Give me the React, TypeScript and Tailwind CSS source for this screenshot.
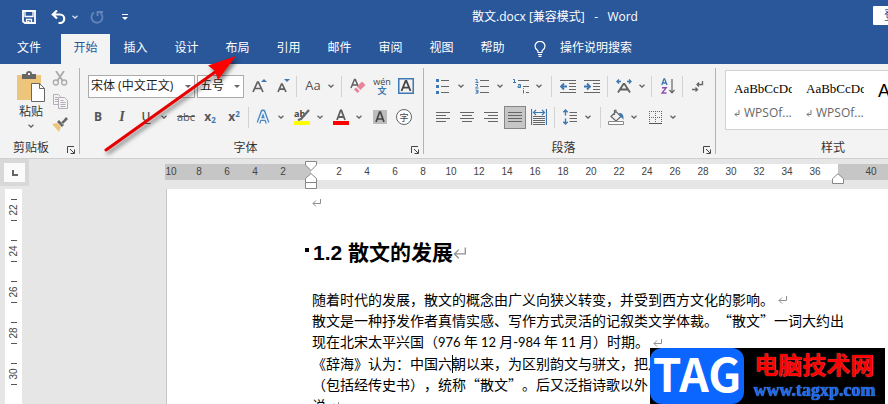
import React from "react";

const ui = "font-['Open_Sans','Noto_Sans_CJK_SC',sans-serif]";

type IconProps = { w?: number; h?: number; children: React.ReactNode };

function Icon({ w = 16, h = 16, children }: IconProps) {
  return (
    <svg width={w} height={h} viewBox={`0 0 ${w} ${h}`} fill="none" className="block shrink-0" aria-hidden="true">
      {children}
    </svg>
  );
}

function Chevron() {
  return (
    <Icon w={6} h={4}>
      <path d="M.5.7 3 3 5.5.7" stroke="#666" strokeWidth="1.3" />
    </Icon>
  );
}

function Tool({ label, children }: { label: string; children: React.ReactNode }) {
  return (
    <button aria-label={label} className="flex h-6 w-6 shrink-0 items-center justify-center">
      {children}
    </button>
  );
}

function Split({ label, children }: { label: string; children: React.ReactNode }) {
  return (
    <div className="flex shrink-0">
      <Tool label={label}>{children}</Tool>
      <button aria-label={`${label}选项`} className="flex h-6 w-3 items-center justify-center">
        <Chevron />
      </button>
    </div>
  );
}

function Bar() {
  return <div className="mx-[4px] h-[21px] w-px shrink-0 bg-[#d2d2d2]" />;
}

function GroupBar() {
  return <div className="mt-1 h-[86px] w-px shrink-0 bg-[#b4b4b4]" />;
}

function Launcher({ name }: { name: string }) {
  return (
    <button aria-label={`${name}设置`} className="mt-1 mr-1">
      <Icon w={8} h={8}>
        <path d="M.5 7V.5H7M3 3l4 4M7.5 3.5v4h-4" stroke="#444" />
      </Icon>
    </button>
  );
}

function GroupLabel({ name }: { name: string }) {
  return (
    <div className="mt-[9px] flex h-5 items-center">
      <span className="flex-1 text-center text-xs text-[#333]">{name}</span>
      <Launcher name={name} />
    </div>
  );
}

function Triangle() {
  return (
    <svg width="6" height="3" viewBox="0 0 6 3" className="pointer-events-none absolute top-[10px] right-1" aria-hidden="true">
      <path d="M0 0h6L3 3z" fill="#666" />
    </svg>
  );
}

function Return({ big = false }: { big?: boolean }) {
  return (
    <svg width={big ? 13 : 9} height={big ? 13 : 9} viewBox="0 0 9 9" fill="none" className="shrink-0" aria-hidden="true">
      <path d="M8.500 1v4.500H1M4 2.500l-3 3 3 3" stroke="#8f8f8f" strokeWidth={big ? 0.9 : 1} />
    </svg>
  );
}

function Lines({ rows }: { rows: [number, number][] }) {
  return (
    <Icon w={14} h={11}>
      {rows.map(([a, b], i) => (
        <path key={i} d={`M${a} ${i * 3 + 0.5}H${b}`} stroke="#666" />
      ))}
    </Icon>
  );
}

function TitleBar() {
  return (
    <div className="flex h-[34px]">
      <div className="flex w-[237px] shrink-0 items-center pl-[22px]">
        <button aria-label="保存">
          <Icon w={14} h={14}>
            <path d="M1 1h12v12H3L1 11.500z" stroke="#fff" strokeWidth="1.800" />
            <path d="M3 1v5.500h8V1M4.500 13V9.500h5V13" stroke="#fff" strokeWidth="1.300" />
            <path d="M5.500 11h2v2h-2z" fill="#fff" />
          </Icon>
        </button>
        <button aria-label="撤消" className="ml-[15px]">
          <Icon w={15} h={14}>
            <path d="M1.500 4.500H9a4 4 0 0 1 0 8.500H7.500M6 .5 1.800 4.500 6 8.500" stroke="#fff" strokeWidth="2.200" />
          </Icon>
        </button>
        <button aria-label="撤消选项" className="ml-[6px]">
          <Icon w={6} h={4}>
            <path d="M.5.7 3 3 5.500.7" stroke="#d5deec" strokeWidth="1.300" />
          </Icon>
        </button>
        <button aria-label="重复" className="ml-3">
          <Icon w={14} h={14}>
            <path d="M4 2.600a5.500 5.500 0 1 0 6.500.4M7.500 6V2H13" stroke="#6485b8" strokeWidth="1.800" />
          </Icon>
        </button>
        <button aria-label="自定义快速访问工具栏" className="ml-[18px]">
          <Icon w={6} h={7}>
            <path d="M0 .5h6" stroke="#fff" />
            <path d="M0 3h6L3 6z" fill="#fff" />
          </Icon>
        </button>
      </div>
      <h1 className="flex-1 text-center text-xs leading-[33px] whitespace-pre text-white">
        散文.docx [兼容模式]{"   -   "}Word
      </h1>
      <button className="mt-[6px] h-[19px] w-[15px] overflow-hidden rounded-l-[1px] bg-white pl-[11px] text-left text-xs leading-[18px] whitespace-nowrap text-[#2a579a]">
        登录
      </button>
    </div>
  );
}

function Tabs() {
  const tabs = ["插入", "设计", "布局", "引用", "邮件", "审阅", "视图", "帮助"];
  return (
    <nav className="flex h-[30px] text-xs text-white">
      <button className="w-[61px] pr-[3px] pb-[2px]">文件</button>
      <button className="w-[49px] bg-[#f3f3f3] pb-[2px] text-[#2a579a]">开始</button>
      {tabs.map((t) => (
        <button key={t} className="w-[51px] pb-[2px]">
          {t}
        </button>
      ))}
      <label className="ml-4 flex flex-1 items-center">
        <Icon w={12} h={16}>
          <path d="M4 11.500V10C2.500 8.800 1 7.500 1 5.300a5 5 0 0 1 10 0C11 7.500 9.500 8.800 8 10v1.500zM4 13.500h4M4.500 15.300h3" stroke="#fff" strokeWidth="1.200" />
        </Icon>
        <input
          aria-label="操作说明搜索"
          placeholder="操作说明搜索"
          className="ml-[14px] w-40 bg-transparent pb-[2px] outline-none placeholder:text-white"
        />
      </label>
    </nav>
  );
}

function Clipboard() {
  return (
    <section className="flex w-[79px] shrink-0 flex-col">
      <div className="flex h-[65px] pt-[7px] pl-[15px]">
        <button className="flex h-[60px] w-8 shrink-0 flex-col items-center text-xs text-[#333]">
          <Icon w={28} h={31}>
            <path d="M0 4h24v25H0z" fill="#edc67c" />
            <path d="M5 3h4a3 3 0 0 1 6 0h4v5H5z" fill="#666" />
            <path d="M11 2h2v2h-2z" fill="#f3f3f3" />
            <path d="M14.500 12.500h8l5 5v13h-13z" fill="#fff" stroke="#666" />
            <path d="M22.500 12.500v5h5" stroke="#666" />
          </Icon>
          <span className="leading-5">粘贴</span>
          <span className="pt-[2px]">
            <Chevron />
          </span>
        </button>
        <div className="ml-[5px] flex flex-col items-center gap-[8px]">
          <button aria-label="剪切">
            <Icon w={16} h={15}>
              <path d="M4 0l6.500 9.500M12 0 5.500 9.500" stroke="#aaa" strokeWidth="1.800" />
              <circle cx="3.800" cy="11.500" r="2.500" stroke="#aaa" strokeWidth="1.300" />
              <circle cx="12.200" cy="11.500" r="2.500" stroke="#aaa" strokeWidth="1.300" />
            </Icon>
          </button>
          <button aria-label="复制">
            <Icon w={16} h={15}>
              <path d="M1.500.5h5l2 2v8h-7zM3 3.500h3M3 5.500h3M3 7.500h3" stroke="#b5adb8" />
              <path d="M6.500 3.500h6l3 3v8h-9z" fill="#f3f3f3" stroke="#b5adb8" />
              <path d="M8.500 6.500h3M8.500 8.500h5M8.500 10.500h5M8.500 12.500h5" stroke="#b5adb8" />
            </Icon>
          </button>
          <button aria-label="格式刷">
            <Icon w={16} h={15}>
              <path d="M0 7l5-1 4 4-2 5z" fill="#edc67c" />
              <path d="M5 5l5 5 2-2-5-5zM9 5.500 11.500 3 14 0l2 2-3 3-2.500 2.500z" fill="#666" />
            </Icon>
          </button>
        </div>
      </div>
      <div className="mt-[9px] flex h-5 items-center pl-[13px]">
        <span className="flex-1 text-xs text-[#333]">剪贴板</span>
        <Launcher name="剪贴板" />
      </div>
    </section>
  );
}

function FontGroup() {
  return (
    <section className="w-[343px] shrink-0 pt-[10px] text-[#555]">
      <div className="flex h-6 items-center pl-2">
        <div className="relative w-[107px]">
          <select aria-label="字体" className="block h-[23px] w-full appearance-none border border-[#ababab] bg-white pl-[2px] text-xs text-[#222]">
            <option>宋体 (中文正文)</option>
          </select>
          <Triangle />
        </div>
        <div className="relative ml-[2px] w-[47px]">
          <select aria-label="字号" className="block h-[23px] w-full appearance-none border border-[#ababab] bg-white pl-[2px] text-xs text-[#222]">
            <option>五号</option>
          </select>
          <Triangle />
        </div>
        <div className="ml-[3px] flex items-center">
          <Tool label="增大字号">
            <Icon>
              <path d="M2 14 6.500 4h.8L12 14M3.500 10.500h7" stroke="#606060" strokeWidth="1.700" />
              <path d="M10 4h6l-3-3z" fill="#3c78b4" />
            </Icon>
          </Tool>
          <Tool label="减小字号">
            <Icon>
              <path d="M3 14 6.500 6h.7L11 14M4.500 11.200h5" stroke="#606060" strokeWidth="1.700" />
              <path d="M9 1h6l-3 3z" fill="#3c78b4" />
            </Icon>
          </Tool>
          <div className="mr-[4px] ml-[1px] h-[21px] w-px bg-[#d2d2d2]" />
          <Split label="更改大小写">
            <span className="text-[13px]">Aa</span>
          </Split>
          <Bar />
          <Tool label="清除所有格式">
            <Icon>
              <path d="M1 10 4.500 1.500h.8L8.500 9M2.500 7h5" stroke="#606060" strokeWidth="1.500" />
              <path d="M7 8.500 12 3.500l3.500 3.500-5 5z" fill="#e8849a" />
              <path d="M6 9.500 9.500 13 7.500 15 4 11.500z" fill="#e8849a" />
            </Icon>
          </Tool>
          <Tool label="拼音指南">
            <span className="flex flex-col items-center">
              <span className="text-[9px] leading-[9px] text-[#444]">wén</span>
              <span className="text-[9px] leading-[10px] font-bold text-[#3c78b4]">文</span>
            </span>
          </Tool>
          <Tool label="字符边框">
            <Icon>
              <path d="M.75.75h14.500v14.500H.75z" stroke="#3c78b4" strokeWidth="1.500" />
              <path d="M3.500 13 7.600 3h.8l4.100 10M5 9.700h6" stroke="#444" strokeWidth="1.800" />
            </Icon>
          </Tool>
        </div>
      </div>
      <div className="mt-[7px] flex h-6 items-center pl-[6px]">
        <Tool label="加粗">
          <b className="text-xs">B</b>
        </Tool>
        <Tool label="倾斜">
          <i className="font-['Liberation_Serif',serif] text-sm font-bold">I</i>
        </Tool>
        <Split label="下划线">
          <span className="text-xs font-semibold underline underline-offset-2">U</span>
        </Split>
        <div className="ml-[4px] flex">
          <Tool label="删除线">
            <span className="text-[11px] line-through">abc</span>
          </Tool>
          <Tool label="下标">
            <b className="text-xs">
              x<sub className="text-[8px] text-[#3c78b4]">2</sub>
            </b>
          </Tool>
          <Tool label="上标">
            <b className="text-xs">
              x<sup className="text-[8px] text-[#3c78b4]">2</sup>
            </b>
          </Tool>
        </div>
        <div className="mx-[2px] h-[21px] w-px bg-[#d2d2d2]" />
        <div className="flex gap-[3px]">
          <Split label="文本效果">
            <Icon>
              <path d="M3.500 14 7.600 2.500h.8L12.500 14M5 10h6" stroke="#4a86c0" strokeWidth="4" strokeLinejoin="round" />
              <path d="M3.500 14 7.600 3h.8L12.500 14M5 10h6" stroke="#f2f7fc" strokeWidth="1.500" />
            </Icon>
          </Split>
          <Split label="突出显示颜色">
            <Icon w={16} h={16}>
              <text x="0" y="8" fontSize="9" fontWeight="bold" fill="#444">ab</text>
              <path d="M4 11l3-1 8-9" stroke="#666" strokeWidth="2.200" />
              <path d="M0 12h16v4H0z" fill="#ff0" />
            </Icon>
          </Split>
          <Split label="字体颜色">
            <Icon w={16} h={16}>
              <path d="M4 11 7.600 1.500h.8L12 11M5.500 8h5" stroke="#606060" strokeWidth="1.800" />
              <path d="M0 12h16v4H0z" fill="#f00" />
            </Icon>
          </Split>
          <div className="flex">
            <Tool label="字符底纹">
              <Icon w={14} h={14}>
                <path d="M0 0h14v14H0z" fill="#bdbdbd" />
                <path d="M3 12 6.600 2h.8L11 12M4.500 9h5" stroke="#444" strokeWidth="1.700" />
              </Icon>
            </Tool>
            <Tool label="带圈字符">
              <span className="flex h-4 w-4 items-center justify-center rounded-full border border-[#666] bg-white text-[9px] leading-none text-[#444]">
                字
              </span>
            </Tool>
          </div>
        </div>
      </div>
      <GroupLabel name="字体" />
    </section>
  );
}

function ParagraphGroup() {
  return (
    <section className="w-[291px] shrink-0 pt-[10px] text-[#555]">
      <div className="flex h-6 items-center pl-[7px]">
        <div className="flex gap-[3px]">
          <Split label="项目符号">
            <Icon w={14} h={16}>
              <path d="M0 1h3v3H0zM0 7h3v3H0zM0 13h3v3H0z" fill="#3c78b4" />
              <path d="M5 2.500h8M5 8.500h8M5 14.500h8" stroke="#666" />
            </Icon>
          </Split>
          <Split label="编号">
            <Icon w={14} h={16}>
              <path d="M.5 1.500H2v3M.5 4.500h3M.5 6.500h2v1.700L.5 10h3M.5 12.200h2.500v3H.5M1 13.700h2" stroke="#3c78b4" />
              <path d="M5 2.500h9M5 8.500h9M5 14.500h9" stroke="#666" />
            </Icon>
          </Split>
          <Split label="多级列表">
            <Icon>
              <path d="M0 1.500h1.500v3M0 4.500h3M5 6.500h2.500v3H5V8h2.500M10.500 12v3.500M10.500 10v1" stroke="#3c78b4" />
              <path d="M5 2.500h11M10 8.500h6M13 14.500h3" stroke="#666" />
            </Icon>
          </Split>
        </div>
        <div className="mr-[4px] ml-[6px] h-[21px] w-px bg-[#d2d2d2]" />
        <Tool label="减少缩进量">
          <Icon w={16} h={14}>
            <path d="M0 1.500h16M9 4.500h7M9 7.500h7M9 10.500h7M0 13.500h16" stroke="#666" />
            <path d="M7 7.500H1M4 4.500l-3 3 3 3" stroke="#3c78b4" strokeWidth="1.800" />
          </Icon>
        </Tool>
        <Tool label="增加缩进量">
          <Icon w={16} h={14}>
            <path d="M0 1.500h16M9 4.500h7M9 7.500h7M9 10.500h7M0 13.500h16" stroke="#666" />
            <path d="M0 7.500h6M3 4.500l3 3-3 3" stroke="#3c78b4" strokeWidth="1.800" />
          </Icon>
        </Tool>
        <div className="mr-[4px] ml-[3px] h-[21px] w-px bg-[#d2d2d2]" />
        <Split label="中文版式">
          <Icon>
            <path d="M2 14.500 7.500 6h1l5.500 8.500M4.500 11.500h7" stroke="#606060" strokeWidth="1.800" />
            <path d="M5 3.500H1M3 1.500l-2 2 2 2M11 3.500h4M13 1.500l2 2-2 2" stroke="#3c78b4" strokeWidth="1.400" />
          </Icon>
        </Split>
        <div className="mr-[4px] ml-[3px] h-[21px] w-px bg-[#d2d2d2]" />
        <Tool label="排序">
          <Icon w={14} h={16}>
            <path d="M.8 7 3 .8h.6L6 7M1.500 5h3.500" stroke="#3c78b4" strokeWidth="1.300" />
            <path d="M1 9.700h4.200L1 15h4.500" stroke="#9050b0" strokeWidth="1.400" />
            <path d="M11 1v13.500M8.500 12l2.500 2.800 2.500-2.800" stroke="#666" strokeWidth="1.200" />
          </Icon>
        </Tool>
        <div className="mr-[3px] ml-[2px] h-[21px] w-px bg-[#d2d2d2]" />
        <Tool label="显示编辑标记">
          <Icon w={12} h={13}>
            <path d="M10.500 1v3.500H5M7 2.500l-2 2 2 2M0 9.500h5.500M3.500 7.500l2 2-2 2" stroke="#666" strokeWidth="1.300" />
          </Icon>
        </Tool>
      </div>
      <div className="mt-[7px] flex h-6 items-center pl-[7px]">
        <Tool label="左对齐">
          <Lines rows={[[0, 14], [0, 10], [0, 14], [0, 10]]} />
        </Tool>
        <Tool label="居中">
          <Lines rows={[[0, 14], [2, 12], [0, 14], [2, 12]]} />
        </Tool>
        <Tool label="右对齐">
          <Lines rows={[[0, 14], [4, 14], [0, 14], [4, 14]]} />
        </Tool>
        <button aria-label="两端对齐" className="mx-px flex h-[23px] w-[22px] items-center justify-center border border-[#868686] bg-[#c6c6c6]">
          <Lines rows={[[0, 14], [0, 14], [0, 14], [0, 14]]} />
        </button>
        <Tool label="分散对齐">
          <Icon>
            <path d="M.5 0v16M15.500 0v16M3 3.500h10M5 1l-2.500 2.500L5 6M11 1l2.500 2.500L11 6" stroke="#3c78b4" strokeWidth="1.200" />
            <path d="M2 7.500h12M2 9.500h12M2 11.500h12M2 13.500h12M2 15.500h12" stroke="#666" />
          </Icon>
        </Tool>
        <div className="mx-[3px] h-[21px] w-px bg-[#d2d2d2]" />
        <Split label="行距">
          <Icon w={14} h={16}>
            <path d="M2.500 1v5.500M.3 3.200 2.500 1l2.200 2.200M2.500 9.500V15M.3 12.800 2.500 15l2.200-2.200" stroke="#3c78b4" strokeWidth="1.400" />
            <path d="M6.500 3.500H14M6.500 6.500H14M6.500 9.500H14M6.500 12.500H14" stroke="#666" />
          </Icon>
        </Split>
        <div className="mr-[3px] ml-[6px] h-[21px] w-px bg-[#d2d2d2]" />
        <div className="flex gap-[3px]">
          <Split label="底纹">
            <Icon>
              <path d="M3 7.500 8 2.500l5 5-5 4.500zM6.500 6V1.500a1.500 1.500 0 0 1 2 0" stroke="#666" strokeWidth="1.200" />
              <path d="M11 4c3-.5 5 2 4.500 7-1-2-2-2.500-3-3z" fill="#3c78b4" />
              <path d="M.5 12.500h15v3H.5z" fill="#fff" stroke="#888" />
            </Icon>
          </Split>
          <Split label="边框">
            <Icon w={13} h={13}>
              <path d="M0 .5h13M0 6.500h13M.5 0v13M6.500 0v13M12.500 0v13" stroke="#666" strokeDasharray="1 1" />
              <path d="M0 12.500h13" stroke="#555" />
            </Icon>
          </Split>
        </div>
      </div>
      <GroupLabel name="段落" />
    </section>
  );
}

function StylesGroup() {
  return (
    <section className="min-w-0 flex-1 overflow-hidden pt-[6px] pl-[9px]">
      <div className="flex h-[60px] w-[216px] border border-[#d2d2d2] bg-white">
        {[0, 1].map((n) => (
          <button key={n} className="flex w-[72px] shrink-0 flex-col pt-[9px] pr-[6px] pl-2 text-left">
            <span className="block w-full overflow-hidden font-['Liberation_Serif',serif] text-[13px] leading-[18px] text-black">AaBbCcDd</span>
            <span className="mt-[5px] flex items-center gap-1 text-xs leading-5 text-[#666]">
              <Icon w={6} h={7}>
                <path d="M5 0v4.500H1M3 2.500l-2 2 2 2" stroke="#777" />
              </Icon>
              WPSOf...
            </span>
          </button>
        ))}
        <button className="flex w-[72px] shrink-0 flex-col pt-[11px] pl-2 text-left font-['Liberation_Sans',sans-serif] text-lg leading-[18px] text-black">
          AaBb
        </button>
      </div>
      <p className="mt-[8px] w-[216px] text-center text-xs leading-5 text-[#333]">样式</p>
    </section>
  );
}

function HorizontalRuler() {
  const inner = Array.from({ length: 18 }, (_, i) => (i + 1) * 2);
  return (
    <div className="ml-[136px] flex h-[30px] shrink-0 pt-[5px] font-['Liberation_Sans',sans-serif] text-[10px] leading-4 text-[#444]">
      <div className="flex h-4 w-[146px] shrink-0 justify-end overflow-hidden bg-[#c6c6c6] pr-[14px]">
        {[10, 8, 6, 4, 2].map((n) => (
          <span key={n} className="w-7 shrink-0 text-center">
            {n}
          </span>
        ))}
      </div>
      <div className="relative flex h-4 w-[527px] shrink-0 bg-white pl-[14px]">
        <svg width="12" height="28" viewBox="0 0 12 28" className="absolute -top-[3px] -left-[6px]" aria-hidden="true">
          <path d="M.5.5h11V4L6 9.500.5 4zM6 12.500l5.500 5V27.500H.500V17.500zM.5 21.500h11" fill="#fff" stroke="#888" />
        </svg>
        {inner.map((n) => (
          <span key={n} className="w-7 shrink-0 text-center">
            {n}
          </span>
        ))}
        <svg width="12" height="11" viewBox="0 0 12 11" className="absolute top-[9px] -right-[6px] z-10" aria-hidden="true">
          <path d="M6 .7l5.500 5v4.800H.5V5.700z" fill="#fff" stroke="#888" />
        </svg>
      </div>
      <div className="h-4 flex-1 overflow-hidden bg-[#c6c6c6] pl-[19px]">
        <span className="block w-7 text-center">40</span>
      </div>
    </div>
  );
}

function VerticalRuler() {
  return (
    <div className="flex w-[29px] shrink-0 flex-col font-['Liberation_Sans',sans-serif] text-[10px] text-[#444]">
      <button aria-label="制表符" className="flex h-[27px] shrink-0 items-center justify-center border-4 border-[#d8d8d8] bg-[#fafafa]">
        <Icon w={6} h={6}>
          <path d="M1 0v5h5" stroke="#666" strokeWidth="2" />
        </Icon>
      </button>
      <div className="mt-[3px] ml-[5px] w-[17px] flex-1 overflow-hidden bg-white">
        {[22, 24, 26, 28, 30, 32].map((n) => (
          <div key={n} className="flex h-[41px] flex-col items-center justify-center gap-1">
            <span className="h-px w-[6px] bg-[#555]" />
            <span className="flex h-3 w-4 -rotate-90 items-center justify-center leading-3">{n}</span>
            <span className="h-px w-[6px] bg-[#555]" />
          </div>
        ))}
      </div>
    </div>
  );
}

function Num({ children }: { children: React.ReactNode }) {
  return <span className="font-['Lato',sans-serif] text-[13px]">{children}</span>;
}

function Paper() {
  return (
    <article
      lang="zh-CN"
      className="ml-[137px] min-h-0 flex-1 border-l border-[#c6c6c6] bg-white pt-[3px] pl-[145px] font-['Noto_Sans_CJK_SC',sans-serif] text-sm leading-[21px] whitespace-nowrap text-black [text-spacing-trim:space-all]"
    >
      <p className="flex h-[21px] items-center">
        <Return />
      </p>
      <h2 className="mt-[25px] -ml-[7px] flex h-7 items-center font-['Liberation_Sans','Noto_Sans_CJK_SC',sans-serif] text-[21px] font-bold">
        <span className="mr-1 mb-1 h-1 w-1 bg-black" />
        1.2 散文的发展
        <Return big />
      </h2>
      <div className="mt-[23px]">
        <p className="flex items-center gap-1">
          随着时代的发展，散文的概念由广义向狭义转变，并受到西方文化的影响。
          <Return />
        </p>
        <p>散文是一种抒发作者真情实感、写作方式灵活的记叙类文学体裁。“散文”一词大约出</p>
        <p className="flex items-center gap-1">
          <span>
            现在北宋太平兴国（<Num>976</Num> 年 <Num>12</Num> 月<Num>-984</Num> 年 <Num>11</Num> 月）时期。
          </span>
          <Return />
        </p>
        <p className="flex items-center">
          《辞海》认为：中国六
          <span className="-mr-px h-[18px] w-px bg-black" />
          朝以来，为区别韵文与骈文，把凡
        </p>
        <p>（包括经传史书），统称“散文”。后又泛指诗歌以外</p>
        <p className="flex items-center gap-1">
          说
          <Return />
        </p>
      </div>
    </article>
  );
}

function Watermark() {
  return (
    <div className="absolute right-[3px] bottom-0 flex h-14 w-[235px] bg-black">
      <div className="flex w-[94px] items-center justify-center rounded-xl bg-[#0a66ff] pb-2 font-['Noto_Sans_CJK_SC',sans-serif] text-[46px] leading-none font-bold text-white">
        TAG
      </div>
      <div className="flex flex-1 flex-col items-center justify-center whitespace-nowrap">
        <span className="font-['Noto_Sans_CJK_SC',sans-serif] text-2xl leading-7 font-bold text-[#f00] [text-shadow:0_0_1px_#f88]">
          电脑技术网
        </span>
        <a href="#tagxp" className="font-['Liberation_Serif',serif] text-lg leading-6 font-bold text-[#1468f0] [text-shadow:0_0_1px_#9cc4ff]">
          www.tagxp.com
        </a>
      </div>
    </div>
  );
}

function Arrow() {
  return (
    <svg width="150" height="110" viewBox="0 0 150 110" className="pointer-events-none absolute top-[50px] left-[98px] drop-shadow-[2px_3px_2px_rgba(0,0,0,0.5)]" aria-hidden="true">
      <path d="M8 100 120 20" stroke="#e80000" strokeWidth="3" strokeLinecap="round" />
      <path d="M138 6 110 15.500 117 21 120 30z" fill="#f00" />
    </svg>
  );
}

export default function App() {
  return (
    <div className={`relative flex h-screen flex-col overflow-hidden bg-[#e6e6e6] ${ui}`}>
      <header className="shrink-0 bg-[#2a579a]">
        <TitleBar />
        <Tabs />
      </header>
      <div className="flex h-[95px] shrink-0 border-b border-[#cfcfcf] bg-[#f3f3f3]">
        <Clipboard />
        <GroupBar />
        <FontGroup />
        <GroupBar />
        <ParagraphGroup />
        <GroupBar />
        <StylesGroup />
      </div>
      <main className="relative flex min-h-0 flex-1 overflow-hidden">
        <VerticalRuler />
        <div className="flex min-w-0 flex-1 flex-col">
          <HorizontalRuler />
          <Paper />
        </div>
        <Watermark />
      </main>
      <Arrow />
    </div>
  );
}
